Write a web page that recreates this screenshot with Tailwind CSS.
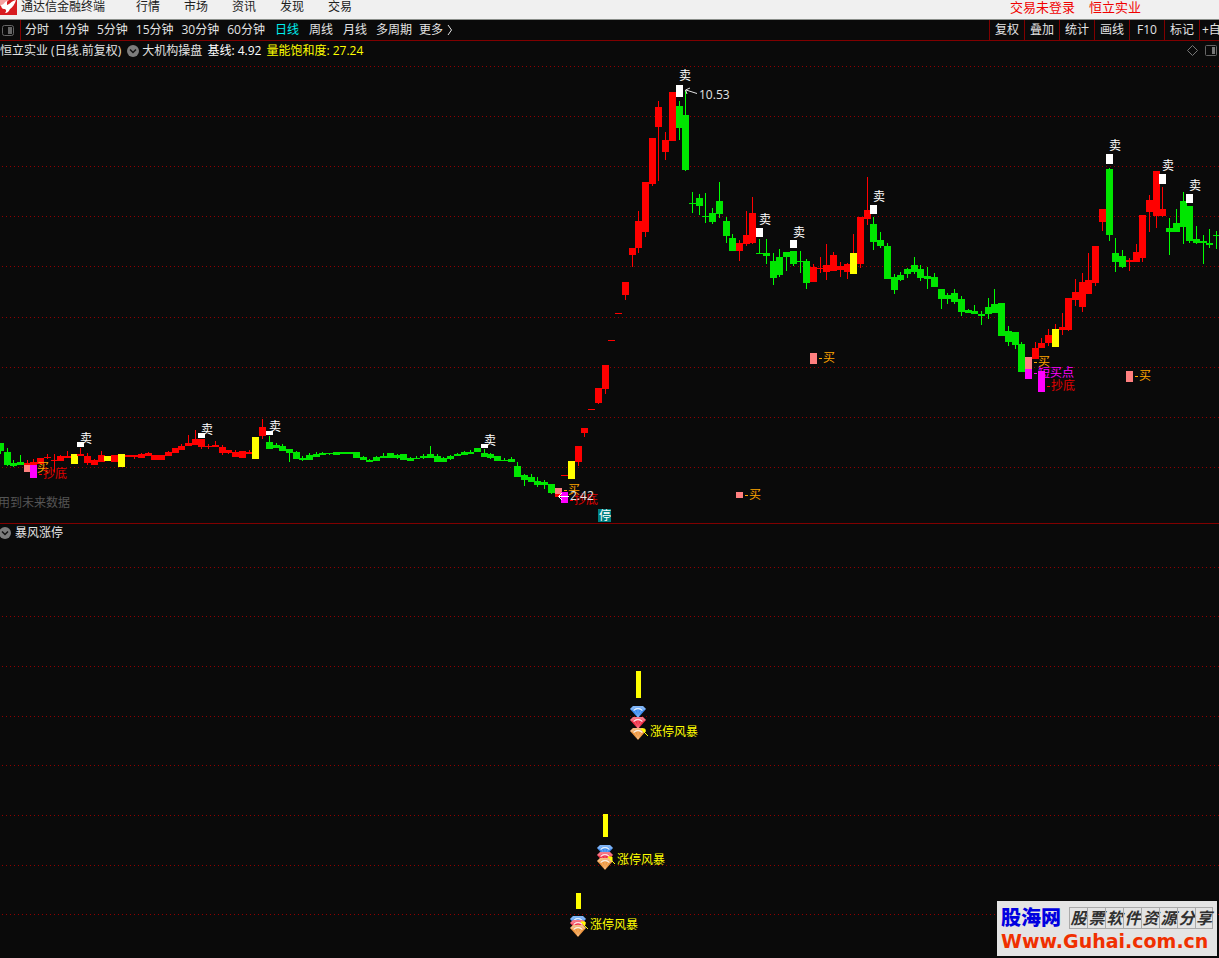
<!DOCTYPE html>
<html lang="zh-CN">
<head>
<meta charset="utf-8">
<title>通达信金融终端</title>
<script src="https://cdn.jsdelivr.net/npm/@tailwindcss/browser@4"></script>
</head>
<body class="relative min-h-screen overflow-x-hidden bg-[#0a0a0a] font-['Open_Sans','Noto_Sans_CJK_SC',sans-serif] text-xs leading-4 text-[#e4e4e4]">

<header class="flex h-5 items-start justify-between border-b border-[#8a8e8a] bg-[#f0f0f0] pr-[78px] text-[#202020]">
  <div class="flex items-start">
    <svg class="mr-1 h-[15px] w-[17px]" viewBox="0 0 17 15" aria-hidden="true">
      <rect width="17" height="15" fill="#d81c20"/>
      <path d="M0 0H9L4 5L0 6Z" fill="#f4a0a0"/>
      <path d="M1 5C4 5 4 2 7 1V5C9 5 11 1 16 0C15 4 12 8 10 9C9 11 8 13 5 13C7 11 6 9 4 9C2 9 1 7 1 5Z" fill="#fff"/>
    </svg>
    <h1 class="mr-[31px] -mt-px">通达信金融终端</h1>
    <nav class="-mt-px flex gap-6">
      <button>行情</button><button>市场</button><button>资讯</button><button>发现</button><button>交易</button>
    </nav>
  </div>
  <div class="-mt-px flex gap-[14px] text-[13px] text-[#f00000]">
    <button>交易未登录</button><button>恒立实业</button>
  </div>
</header>

<div class="flex h-[21px] items-stretch justify-between border-b border-[#800000]">
  <div class="flex items-stretch">
    <button class="flex w-[21px] items-center border-r border-[#800000] pl-0.5" aria-label="侧栏">
      <svg class="h-[11px] w-3" viewBox="0 0 12 11"><rect x=".5" y=".5" width="11" height="10" rx="2" fill="none" stroke="#666"/><rect x="6" y="2" width="4" height="7" fill="#666"/></svg>
    </button>
    <div class="flex items-center gap-2 pl-1">
      <button class="mr-px">分时</button><button>1分钟</button><button>5分钟</button><button>15分钟</button><button>30分钟</button><button>60分钟</button>
    </div>
    <div class="flex items-center gap-[10px] pl-[10px]">
      <button class="text-[#00f0f0]">日线</button><button>周线</button><button>月线</button>
    </div>
    <div class="flex items-center gap-[7px] pl-[9px]">
      <button>多周期</button>
      <button class="flex items-center gap-1">更多
        <svg class="h-3 w-[6px]" viewBox="0 0 6 12"><path d="M1 1L4.500 6L1 11" fill="none" stroke="#e4e4e4"/></svg>
      </button>
    </div>
  </div>
  <div class="flex items-stretch overflow-hidden">
    <button class="w-[35px] border-l border-[#800000]">复权</button>
    <button class="w-[35px] border-l border-[#800000]">叠加</button>
    <button class="w-[35px] border-l border-[#800000]">统计</button>
    <button class="w-[35px] border-l border-[#800000]">画线</button>
    <button class="w-[35px] border-l border-[#800000]">F10</button>
    <button class="w-[35px] border-l border-[#800000]">标记</button>
    <button class="w-5 overflow-hidden whitespace-nowrap border-l border-[#800000] pl-0.5 text-left">+自选</button>
  </div>
</div>

<main>
  <section class="border-b border-[#800000]">
    <div class="flex h-[19px] items-center justify-between pr-0.5">
      <div class="flex items-center">
        <h2 class="mr-[6px]">恒立实业 (日线.前复权)</h2>
        <button class="mr-[3px]" aria-label="指标菜单">
          <svg class="h-3 w-3" viewBox="0 0 12 12"><circle cx="6" cy="6" r="6" fill="#7c7c7c"/><path d="M3 4.500L6 7.500L9 4.500" fill="none" stroke="#111" stroke-width="1.500"/></svg>
        </button>
        <span class="mr-[5px]">大机构操盘</span>
        <span class="mr-[5px] text-white">基线: 4.92</span>
        <span class="text-[#ffff00]">量能饱和度: 27.24</span>
      </div>
      <div class="flex items-center gap-[7px]">
        <button aria-label="标记"><svg class="h-[11px] w-[11px]" viewBox="0 0 11 11"><path d="M5.500 .5L10.500 5.500L5.500 10.500L.5 5.500Z" fill="none" stroke="#777"/></svg></button>
        <button aria-label="右侧栏"><svg class="h-[11px] w-3" viewBox="0 0 12 11"><rect x=".5" y=".5" width="11" height="10" rx="1" fill="none" stroke="#666"/><rect x="7" y="2" width="3" height="7" fill="#777"/></svg></button>
      </div>
    </div>
    <svg id="price" class="block w-full text-xs" viewBox="0 60 1219 463" role="img" aria-label="日线图"></svg>
  </section>

  <section>
    <div class="flex h-[17px] items-center gap-1">
      <button class="-ml-px" aria-label="指标菜单">
        <svg class="h-3 w-3" viewBox="0 0 12 12"><circle cx="6" cy="6" r="6" fill="#7c7c7c"/><path d="M3 4.500L6 7.500L9 4.500" fill="none" stroke="#111" stroke-width="1.500"/></svg>
      </button>
      <h2>暴风涨停</h2>
    </div>
    <svg id="storm" class="block w-full text-xs" viewBox="0 541 1219 417" role="img" aria-label="暴风涨停">
      <defs>
        <g id="gem-shape">
          <path d="M0 3L3 0H13L16 3L8 12Z"/>
          <path d="M0 3L3 0H13L16 3L14 4Q8 -1 2 4Z" fill="#fff" fill-opacity=".35"/>
          <path d="M3.500 4.500Q8 .5 12.500 4.500" fill="none" stroke="#fff" stroke-opacity=".85" stroke-width="1.300"/>
          <path d="M8 4V11M5 5L8 11L11 5" fill="none" stroke="#fff" stroke-opacity=".3" stroke-width=".8"/>
        </g>
      </defs>
    </svg>
  </section>
</main>

<aside class="absolute right-0.5 bottom-0.5 flex h-[55px] w-[220px] flex-col bg-[#e4e4e4] px-1 pt-1">
  <div class="flex h-[25px] items-center justify-between">
    <span class="text-xl leading-6 font-black text-[#0000e0]">股海网</span>
    <span class="flex text-base leading-5 font-bold text-[#303030] italic">
      <span class="w-[18px] border border-r-0 border-[#aaa] text-center">股</span><span class="w-[18px] border border-r-0 border-[#aaa] text-center">票</span><span class="w-[18px] border border-r-0 border-[#aaa] text-center">软</span><span class="w-[18px] border border-r-0 border-[#aaa] text-center">件</span><span class="w-[18px] border border-r-0 border-[#aaa] text-center">资</span><span class="w-[18px] border border-r-0 border-[#aaa] text-center">源</span><span class="w-[18px] border border-r-0 border-[#aaa] text-center">分</span><span class="w-[18px] border border-[#aaa] text-center">享</span>
    </span>
  </div>
  <a href="#" class="font-['DejaVu_Sans'] text-[19px] leading-[22px] font-bold whitespace-nowrap text-[#f03000]">Www.Guhai.com.cn</a>
</aside>

<script>
const NS = 'http://www.w3.org/2000/svg';
function add(parent, tag, attrs, text) {
  const el = document.createElementNS(NS, tag);
  for (const k in attrs) el.setAttribute(k, attrs[k]);
  if (text) el.textContent = text;
  parent.appendChild(el);
  return el;
}
const rect = (p, x, y, w, h, fill) => add(p, 'rect', {x, y, width: w, height: h, fill, 'shape-rendering': 'crispEdges'});
const label = (p, x, cy, fill, s) => add(p, 'text', {x, y: cy + 5, fill}, s);
function grid(p, ys) {
  for (const y of ys) add(p, 'path', {d: `M2 ${y + .5}H1219`, stroke: '#900000', 'stroke-dasharray': '1 3', 'shape-rendering': 'crispEdges'});
}

// colour, left edge, body top, body bottom, wick top, wick bottom
const candles = `
G -3 443 451 443 454;G 4 452 465 448 466;G 10 463 466 460 467;G 17 462 465 455 465;R 24 463 465 460 465;R 30 462 465 459 465;R 37 458 464 458 464;R 44 457 458 454 459;R 51 460 461 454 472;R 57 456 461 455 461;R 64 456 458 451 458;Y 71 454 464 454 464;R 77 454 456 448 456;R 84 456 463 453 465;R 91 460 465 459 465;R 98 455 462 451 462;R 111 455 462 455 462;Y 104 456 461 456 461;Y 118 454 467 454 467;R 125 455 457 455 457;R 131 455 457 455 459;R 138 454 458 453 458;R 145 453 456 452 456;R 151 455 460 455 460;R 158 455 460 455 460;R 165 452 456 451 456;R 172 448 453 448 453;R 178 446 450 444 450;R 185 443 446 435 446;R 192 439 445 430 445;R 198 439 447 439 449;R 205 446 447 444 449;R 212 445 447 441 447;R 219 447 453 445 455;R 225 450 453 450 454;R 232 452 457 450 457;R 239 451 458 451 458;R 246 452 454 450 454;Y 252 437 459 437 459;R 259 427 436 419 439;G 266 442 449 436 449;G 273 445 448 443 448;G 279 446 451 444 451;G 286 449 453 449 462;G 293 452 459 451 459;G 299 458 460 456 461;G 306 455 460 453 460;G 313 454 457 452 457;G 319 453 455 452 455;G 326 453 454 453 455;G 333 452 455 452 455;G 340 452 454 452 454;G 346 452 454 452 454;G 353 452 458 452 458;G 360 457 460 456 460;G 366 460 462 459 462;G 373 457 461 456 461;G 380 456 458 453 458;G 387 453 458 453 458;G 394 455 458 454 459;G 400 454 460 454 460;G 407 458 461 457 461;G 413 458 459 456 459;G 420 456 458 454 459;G 427 454 458 446 458;G 434 456 462 454 462;G 440 458 462 457 462;G 447 456 459 455 460;G 454 454 456 453 456;G 461 452 455 451 455;G 467 452 454 450 454;G 474 448 452 448 452;G 481 453 457 449 457;G 487 454 458 453 459;G 494 456 461 456 461;G 501 460 461 458 461;G 508 459 462 457 462;G 514 466 477 462 477;G 521 475 480 474 486;G 528 477 482 474 482;G 534 481 485 477 487;G 541 482 485 480 489;G 548 484 493 484 494;R 555 494 497 494 497;R 561 475 476 475 476;Y 568 461 479 461 479;R 575 446 462 446 466;R 581 428 433 428 437;R 588 409 410 409 410;R 595 388 403 388 404;R 602 365 389 365 394;R 608 340 341 340 341;R 615 313 314 313 314;R 622 282 295 282 300;R 629 248 255 248 267;R 635 221 248 211 253;R 642 182 232 182 237;R 649 138 184 138 186;R 655 107 127 101 181;R 662 140 152 132 160;R 669 92 141 92 141;G 676 106 128 101 140;G 682 115 170 90 171;G 689 203 204 192 213;G 696 198 206 194 215;G 702 216 217 193 223;G 709 213 222 208 224;G 716 201 214 182 218;G 723 221 236 217 243;G 729 238 251 234 251;R 736 243 251 240 261;R 743 235 244 211 246;R 749 213 243 197 244;G 756 253 254 239 254;G 763 253 256 239 264;G 770 261 278 253 285;G 776 257 275 249 277;G 783 252 257 252 271;G 790 251 264 251 266;G 797 261 262 251 273;G 803 261 283 259 289;R 810 267 282 264 282;R 817 268 269 257 273;R 823 265 272 244 280;R 830 255 271 252 271;R 837 266 270 262 277;R 844 264 272 263 279;R 850 253 254 234 254;Y 850 253 274 253 274;R 857 217 264 217 268;R 864 210 219 177 225;G 870 224 242 217 250;G 877 240 246 232 248;G 884 246 279 243 279;G 891 277 290 274 294;G 897 275 280 272 281;G 904 269 274 268 278;G 911 265 272 257 274;G 917 269 278 265 281;G 924 276 279 267 289;G 931 277 287 273 287;G 938 289 299 289 309;G 944 295 299 293 304;G 951 293 302 289 304;G 958 299 312 296 316;G 965 310 313 309 313;G 971 311 314 305 314;G 978 314 316 311 325;G 985 307 314 298 319;G 991 304 313 289 313;G 998 303 336 303 336;G 1005 331 342 326 346;G 1012 332 345 332 349;G 1018 344 372 342 372;R 1032 348 359 342 359;R 1038 343 348 338 348;R 1045 335 343 329 346;R 1052 329 330 324 330;Y 1052 329 347 329 347;R 1059 327 330 313 335;R 1065 298 330 298 331;R 1072 292 300 279 306;R 1079 282 307 273 312;R 1085 280 294 253 294;R 1092 246 283 246 286;R 1099 209 222 209 231;G 1106 169 235 168 241;G 1112 253 262 238 272;G 1119 256 267 250 268;R 1126 260 262 258 271;R 1133 252 262 244 262;R 1139 215 258 215 262;R 1146 200 212 195 232;R 1153 171 216 171 228;R 1159 209 216 187 217;G 1166 228 232 218 255;G 1173 223 232 209 232;G 1180 201 227 192 244;G 1186 206 241 206 243;G 1193 239 243 226 244;G 1200 241 243 235 264;G 1206 243 245 229 248;G 1213 235 236 231 249`;
const colours = {G: '#00e600', R: '#ff0000', Y: '#ffff00'};
const price = document.getElementById('price');
grid(price, [66, 116, 166, 216, 266, 317, 367, 417, 467]);
for (const row of candles.trim().split(';')) {
  const [c, ...n] = row.split(' ');
  const [x, top, bottom, high, low] = n.map(Number);
  rect(price, x + 3, high, 1, low - high, c === 'G' ? '#00ff00' : colours[c]);
  rect(price, x, top, 7, bottom - top, colours[c]);
}

// sell markers: left edge, top, bottom, label x, label centre
for (const [x, t, b, lx, cy] of [
  [77, 442, 447, 80, 438], [198, 433, 438, 201, 429], [266, 431, 435, 269, 426], [481, 444, 448, 484, 440],
  [676, 85, 97, 679, 75], [756, 228, 237, 759, 219], [790, 240, 248, 793, 232], [870, 205, 214, 873, 196],
  [1106, 154, 164, 1109, 145], [1159, 174, 184, 1162, 165], [1186, 194, 203, 1189, 185]]) {
  rect(price, x, t, 7, b - t, '#ffffff');
  label(price, lx, cy, '#ffffff', '卖');
}

const orange = '#ffa500', pink = '#ff8080', magenta = '#ff00ff';
// buy markers: left edge, top, bottom, label centre
for (const [x, t, b, cy] of [[24, 465, 472, 467], [555, 488, 494, 489], [736, 492, 498, 494], [810, 353, 364, 357], [1025, 357, 369, 361], [1126, 371, 382, 375]]) {
  rect(price, x, t, 7, b - t, pink);
  rect(price, x + 9, cy + 1, 3, 1, orange);
  label(price, x + 13, cy, orange, '买');
}
rect(price, 1025, 369, 7, 10, magenta);
rect(price, 1034, 373, 3, 1, magenta);
label(price, 1038, 372, magenta, '短买点');
for (const [x, t, b, cy] of [[30, 465, 478, 473], [561, 492, 503, 499], [1038, 371, 392, 385]]) {
  rect(price, x, t, 7, b - t, magenta);
  rect(price, x + 9, cy + 1, 3, 1, '#ff0000');
  label(price, x + 13, cy, '#e00000', '抄底');
}

add(price, 'path', {d: 'M697 93.500L686 90M690 88L685.500 90L687 94', fill: 'none', stroke: '#e4e4e4'});
label(price, 699, 94, '#e4e4e4', '10.53');
add(price, 'path', {d: 'M569 496.500H559M562 493L558.500 496.500L562 500', fill: 'none', stroke: '#ffffff'});
label(price, 570, 495, '#e4e4e4', '2.42');
label(price, -2, 502, '#555555', '用到未来数据');
rect(price, 598, 509, 13, 13, '#008080');
label(price, 599, 515, '#ffffff', '停');

const storm = document.getElementById('storm');
grid(storm, [567, 616, 666, 716, 765, 815, 865, 914]);
// bar left, top, bottom, gem tops, label centre
for (const [x, t, b, gems, cy] of [[636, 671, 698, [706, 717, 728], 731], [603, 814, 837, [845, 852, 858], 859], [576, 893, 909, [916, 920, 925], 924]]) {
  rect(storm, x, t, 5, b - t, '#ffff00');
  gems.forEach((y, i) => add(storm, 'use', {href: '#gem-shape', x: x - 6, y, fill: ['#3c8cf0', '#f03048', '#f09840'][i]}));
  add(storm, 'path', {d: `M${x + 5} ${cy - 2}h4v3zM${x + 7} ${cy}l5 5`, fill: '#ffff00', stroke: '#ffff00'});
  label(storm, x + 14, cy, '#ffff00', '涨停风暴');
}
</script>
</body>
</html>
